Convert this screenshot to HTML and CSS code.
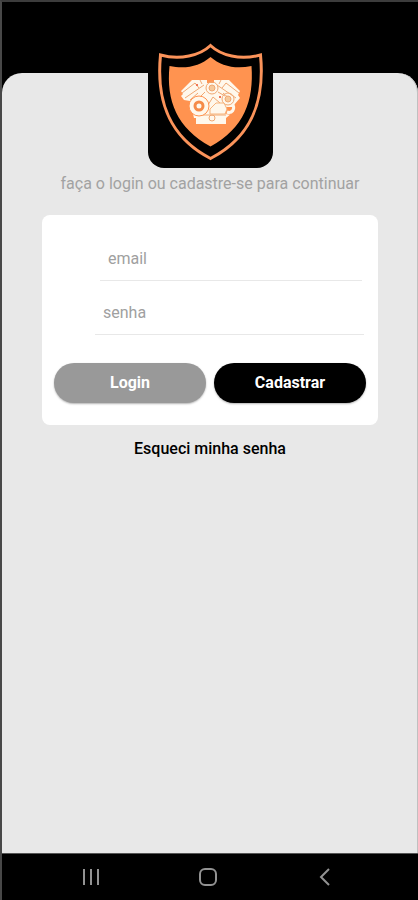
FILE: index.html
```
<!DOCTYPE html>
<html lang="pt-BR">
<head>
    <meta charset="UTF-8">
    <meta name="viewport" content="width=device-width, initial-scale=1.0">
    <title>Login</title>
    <link rel="stylesheet" href="styles.css">
</head>
<body>
    <main class="tela">
        <div class="painel">
            <div class="logo">
                <svg viewBox="0 0 125 125" role="img" aria-label="Escudo com motor">
                    <path d="M62.500 2.500C73 12.500 92 17.500 112.500 12C117 58 104 94 62.500 115.500C21 94 8 58 12.500 12C32 17.500 52 12.500 62.500 2.500Z" fill="#000" stroke="#fb935a" stroke-width="3"/>
                    <path d="M62.500 14C73 23 87 26.500 103.500 23C106 58 96 85 62.500 103.500C29 85 18 58 21.500 23C38 26.500 52 23 62.500 14Z" fill="#ff9350"/>
                    <!-- motor -->
                    <g fill="#fff8ec">
                        <path d="M33 48L44 37H59V40H66V37H81L92 48L90 52L92 55L86 62L84 70L78 75H46L42 58L36 57L33 53L35 51Z"/>
                        <rect x="48" y="72" width="30" height="9"/>
                    </g>
                    <g fill="none" stroke="#f0a873">
                        <path d="M34 50L47 40L51 45M37 55L56 42M52 37L54 41M42 57L50 50"/>
                        <path d="M91 50L78 40L74 45M88 55L69 42M73 37L71 41M83 57L75 50"/>
                        <path d="M57 49L52 54M70 49L77 53M60 62L65 54L72 60M48 72H78"/>
                        <circle cx="64" cy="45" r="6"/>
                        <circle cx="64" cy="45" r="3" fill="#f6c99b"/>
                        <circle cx="80" cy="56" r="6"/>
                        <circle cx="80" cy="56" r="3" fill="#f6c99b"/>
                        <circle cx="64" cy="75" r="3"/>
                    </g>
                    <path d="M77 71L78 64H87L84 72Z" fill="#ff9350"/>
                    <path d="M79 69C84 71 87 66 85 62" fill="none" stroke="#fff8ec" stroke-width="3"/>
                    <circle cx="51" cy="63" r="10" fill="#fff8ec" stroke="#ff9350"/>
                    <circle cx="51" cy="63" r="4" fill="#fff8ec" stroke="#f58b49" stroke-width="3"/>
                    <path d="M62 71V66L68 60H76L79 66L77 71Z" fill="#fff8ec" stroke="#f6b47d"/>
                    <path d="M48 42h2M71 54h2" stroke="#ef7557" stroke-width="2"/>
                </svg>
            </div>
            <p class="aviso">faça o login ou cadastre-se para continuar</p>
            <form class="cartao">
                <input class="campo email" type="email" placeholder="email" aria-label="email">
                <input class="campo senha" type="password" placeholder="senha" aria-label="senha">
                <div class="botoes">
                    <button class="botao login" type="submit">Login</button>
                    <button class="botao" type="button">Cadastrar</button>
                </div>
            </form>
            <a class="esqueci" href="#">Esqueci minha senha</a>
        </div>
    </main>
    <nav class="barra">
        <button type="button" aria-label="Recentes">
            <svg viewBox="0 0 24 24"><path d="M5 4V20M12 4V20M19 4V20"/></svg>
        </button>
        <button type="button" aria-label="Início">
            <svg viewBox="0 0 24 24"><rect x="4" y="4" width="16" height="16" rx="5"/></svg>
        </button>
        <button type="button" aria-label="Voltar">
            <svg viewBox="0 0 24 24"><path d="M16 4L8 12L16 20"/></svg>
        </button>
    </nav>
</body>
</html>
```

FILE: styles.css
```
*{
    margin: 0;
    padding: 0;
    box-sizing: border-box;
}
body{
    display: flex;
    flex-direction: column;
    min-height: 100vh;
    border-top: 2px solid #3c3c3c;
    border-left: 2px solid #484848;
    background: #000;
    font-family: Roboto, sans-serif;
    font-size: 16px;
    line-height: 20px;
}
.tela{
    flex: 1;
    display: flex;
    flex-direction: column;
    padding-top: 71px;
}
.painel{
    flex: 1;
    display: flex;
    flex-direction: column;
    align-items: center;
    padding: 0 40px;
    border-radius: 20px 20px 0 0;
    background: #e8e8e8;
    box-shadow: inset -1px 0 #c0c0c0;
}
.logo{
    width: 125px;
    height: 125px;
    margin-top: -30px;
    border-radius: 0 0 16px 16px;
    background: #000;
}
.logo svg{
    display: block;
    width: 100%;
}
.aviso{
    margin-top: 6px;
    color: #a2a2a2;
    text-align: center;
}
/* formulario */
.cartao{
    display: flex;
    flex-direction: column;
    width: 100%;
    margin-top: 21px;
    padding: 22px 12px;
    border-radius: 8px;
    background: #fff;
}
.campo{
    height: 44px;
    padding: 0 8px;
    border: 0;
    border-bottom: 1px solid #e8e8e8;
    background: none;
    font: inherit;
    outline: none;
}
.campo::placeholder{
    color: #a0a0a0;
    opacity: 1;
}
.email{
    margin: 0 4px 0 46px;
}
.senha{
    margin: 10px 2px 0 41px;
}
.botoes{
    display: flex;
    gap: 8px;
    margin-top: 28px;
}
.botao{
    flex: 1;
    height: 40px;
    border: 0;
    border-radius: 20px;
    background: #000;
    color: #fff;
    font: inherit;
    font-weight: 700;
    box-shadow: 0 1px 2px rgba(0,0,0,0.3);
}
.login{
    background: #999;
}
.esqueci{
    margin-top: 14px;
    color: #000;
    font-weight: 500;
    text-decoration: none;
}
/* barra do sistema */
.barra{
    display: flex;
    justify-content: space-around;
    align-items: center;
    height: 47px;
    padding: 0 34px 0 30px;
    border-top: 1px solid #555;
}
.barra button{
    width: 24px;
    height: 24px;
    border: 0;
    background: none;
}
.barra svg{
    display: block;
    width: 24px;
    height: 24px;
    fill: none;
    stroke: #929292;
    stroke-width: 2;
}
```
